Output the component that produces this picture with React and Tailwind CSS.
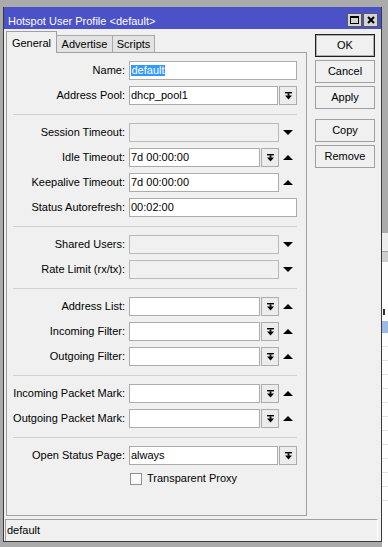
import React from "react";

function DropIcon() {
  return (
    <svg width="7" height="8" viewBox="0 0 7 8">
      <rect x="0" y="0" width="7" height="1.4" fill="#000" />
      <rect x="2.6" y="1.4" width="1.8" height="2.4" fill="#000" />
      <polygon points="0,3.6 7,3.6 3.5,7.6" fill="#000" />
    </svg>
  );
}

function Tri({ up }) {
  return (
    <svg width="10" height="5" viewBox="0 0 10 5">
      <polygon points={up ? "0,5 10,5 5,0" : "0,0 10,0 5,5"} fill="#000" />
    </svg>
  );
}

function Inp({ text, disabled, sel }) {
  return (
    <div
      className={
        disabled
          ? "flex-1 min-w-0 h-full border border-[#bababa] bg-[#f0f0f0]"
          : "flex-1 min-w-0 h-full border border-[#acacac] bg-white flex items-center pl-[1px] leading-none whitespace-nowrap overflow-hidden"
      }
    >
      {sel ? <span className="bg-[#3399ff] text-white px-[0.5px]">{text}</span> : text}
    </div>
  );
}

function Btn() {
  return (
    <div className="w-[18px] h-full ml-[1px] border border-[#acacac] bg-[#ececec] flex items-center justify-center shrink-0">
      <DropIcon />
    </div>
  );
}

function Arr({ up }) {
  return (
    <div className="w-[18px] h-full flex items-center justify-center shrink-0">
      <Tri up={up} />
    </div>
  );
}

function Row({ label, first, children }) {
  return (
    <div className={first ? "flex h-[19px] items-center" : "flex h-[19px] items-center mt-[6px]"}>
      <div className="w-[118px] text-right leading-none whitespace-nowrap">{label}</div>
      <div className="ml-[4px] w-[168px] h-full flex">{children}</div>
    </div>
  );
}

function Sep() {
  return <div className="ml-[6px] w-[284px] h-px bg-[#d0d0d0] mt-[9px] mb-[8px]" />;
}

function SideBtn({ children, def, extra }) {
  return (
    <div
      className={
        "w-[60px] h-[23px] flex items-center justify-center leading-none bg-[#f0f0f0] " +
        (def ? "border border-[#1e1e1e] shadow-[inset_0_0_0_1px_#b0b0b0] " : "border border-[#a0a0a0] ") +
        (extra || "")
      }
    >
      {children}
    </div>
  );
}

export default function App() {
  const lines = [];
  for (let i = 0; i < 12; i++) {
    lines.push(<div key={i} className="h-[14px] border-b border-[#e4e4e4] bg-white" />);
  }
  return (
    <div className="w-[388px] h-[547px] bg-[#ababab] flex pt-[7px] pl-[3px] overflow-hidden font-['Liberation_Sans',Arial,sans-serif] text-[11px] text-black">
      {/* window */}
      <div className="w-[379px] h-[535px] shrink-0 flex flex-col border-x border-b border-[#3a3a3a] bg-[#f0f0f0]">
        {/* title bar */}
        <div className="h-[22px] bg-[#4b51c6] flex shrink-0">
          <div className="pl-[4px] pt-[9px] leading-none text-white whitespace-nowrap">Hotspot User Profile &lt;default&gt;</div>
          <div className="ml-auto mt-[6px] mr-[3px] flex gap-[1px]">
            <div className="w-[15px] h-[14px] bg-[#d4d4d4] border border-[#5a5a5a] flex items-center justify-center">
              <div className="w-[9px] h-[8px] border border-black border-t-2" />
            </div>
            <div className="w-[15px] h-[14px] bg-[#d4d4d4] border border-[#5a5a5a] flex items-center justify-center">
              <svg width="8" height="8" viewBox="0 0 8 8">
                <path d="M1 1 L7 7 M7 1 L1 7" stroke="#000" strokeWidth="2" />
              </svg>
            </div>
          </div>
        </div>
        {/* body */}
        <div className="flex pt-[2px] pl-[2px]">
          {/* left: tabs + panel */}
          <div className="flex flex-col w-[301px]">
            <div className="flex items-end h-[22px]">
              <div className="relative z-10 w-[51px] h-[22px] border-x border-t border-[#a0a0a0] bg-[#f0f0f0] flex justify-center pt-[6px] leading-none">
                General
              </div>
              <div className="w-[56px] h-[18px] border-r border-t border-[#a9a9a9] bg-[#e3e3e3] flex justify-center pt-[3px] leading-none">
                Advertise
              </div>
              <div className="w-[42px] h-[18px] border-r border-t border-[#a9a9a9] bg-[#e3e3e3] flex justify-center pt-[3px] leading-none">
                Scripts
              </div>
            </div>
            <div className="-mt-px h-[464px] border border-[#a0a0a0] bg-[#f0f0f0] flex flex-col pt-[8px]">
              <Row label="Name:" first>
                <Inp text="default" sel />
              </Row>
              <Row label="Address Pool:">
                <Inp text="dhcp_pool1" />
                <Btn />
              </Row>
              <Sep />
              <Row label="Session Timeout:" first>
                <Inp disabled />
                <Arr />
              </Row>
              <Row label="Idle Timeout:">
                <Inp text="7d 00:00:00" />
                <Btn />
                <Arr up />
              </Row>
              <Row label="Keepalive Timeout:">
                <Inp text="7d 00:00:00" />
                <Arr up />
              </Row>
              <Row label="Status Autorefresh:">
                <Inp text="00:02:00" />
              </Row>
              <Sep />
              <Row label="Shared Users:" first>
                <Inp disabled />
                <Arr />
              </Row>
              <Row label="Rate Limit (rx/tx):">
                <Inp disabled />
                <Arr />
              </Row>
              <Sep />
              <Row label="Address List:" first>
                <Inp text="" />
                <Btn />
                <Arr up />
              </Row>
              <Row label="Incoming Filter:">
                <Inp text="" />
                <Btn />
                <Arr up />
              </Row>
              <Row label="Outgoing Filter:">
                <Inp text="" />
                <Btn />
                <Arr up />
              </Row>
              <Sep />
              <Row label="Incoming Packet Mark:" first>
                <Inp text="" />
                <Btn />
                <Arr up />
              </Row>
              <Row label="Outgoing Packet Mark:">
                <Inp text="" />
                <Btn />
                <Arr up />
              </Row>
              <Sep />
              <Row label="Open Status Page:" first>
                <Inp text="always" />
                <Btn />
              </Row>
              <div className="flex h-[13px] items-center mt-[7px]">
                <div className="w-[123px]" />
                <div className="w-[12px] h-[12px] border border-[#8f8f8f] bg-[#fbfbfb]" />
                <div className="ml-[5px] leading-none">Transparent Proxy</div>
              </div>
            </div>
          </div>
          {/* right buttons */}
          <div className="ml-[8px] pt-[3px] flex flex-col">
            <SideBtn def>OK</SideBtn>
            <SideBtn extra="mt-[3px]">Cancel</SideBtn>
            <SideBtn extra="mt-[3px]">Apply</SideBtn>
            <SideBtn extra="mt-[10px]">Copy</SideBtn>
            <SideBtn extra="mt-[3px]">Remove</SideBtn>
          </div>
        </div>
        {/* status bar */}
        <div className="mt-[3px] ml-[1px] mr-[3px] h-[22px] border-t border-l border-[#a0a0a0] border-r border-r-white flex items-center pl-[1px] leading-none">
          default
        </div>
      </div>
      {/* background window strip */}
      <div className="flex-1 flex flex-col">
        <div className="h-[226px]" />
        <div className="h-[18px] bg-[#ededed]" />
        <div className="h-px bg-[#a0a0a0]" />
        <div className="h-[10px] bg-[#cfcfcf]" />
        <div className="h-[59px] bg-white flex items-end pb-[6px]">
          <div className="w-[2px] h-[6px] ml-[1px] bg-[#333]" />
        </div>
        <div className="h-[12px] bg-[#9bbbe6]" />
        {lines}
        <div className="flex-1 bg-white" />
      </div>
    </div>
  );
}
